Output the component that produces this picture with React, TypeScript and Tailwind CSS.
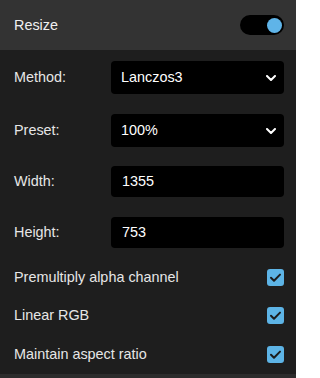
import React from "react";

function Chevron() {
  return (
    <svg width="10" height="6" viewBox="0 0 10 6" fill="none" className="shrink-0">
      <path d="M1 1L5 5L9 1" stroke="#ffffff" strokeWidth="2" strokeLinecap="round" strokeLinejoin="round" />
    </svg>
  );
}

function Check() {
  return (
    <div className="w-[17px] h-[17px] rounded-[3px] bg-[#5db4e6] flex items-center justify-center shrink-0">
      <svg width="17" height="17" viewBox="0 0 17 17" fill="none">
        <path d="M4 8.8L7 11.8L13 5.6" stroke="#1c1c1c" strokeWidth="2" strokeLinecap="round" strokeLinejoin="round" />
      </svg>
    </div>
  );
}

function FieldRow({ label, children, className }: { label: string; children: React.ReactNode; className: string }) {
  return (
    <div className={"flex items-center " + className}>
      <div className="w-[97px] shrink-0 text-[#e6e6e6]">{label}</div>
      {children}
    </div>
  );
}

function CheckRow({ label, className }: { label: string; className: string }) {
  return (
    <div className={"flex items-center justify-between h-[17px] " + className}>
      <span className="text-[#e6e6e6]">{label}</span>
      <Check />
    </div>
  );
}

export default function App() {
  return (
    <div
      className="w-[296px] h-[378px] bg-[#1e1e1e] text-[14.4px] leading-none overflow-hidden"
      style={{ fontFamily: '"Liberation Sans", Arial, sans-serif' }}
    >
      <div className="h-[50px] bg-[#333333] flex items-center justify-between pl-[14px] pr-[12px]">
        <span className="text-[#f0f0f0]">Resize</span>
        <div className="w-[44px] h-[20px] rounded-full bg-black flex items-center justify-end pr-[2.5px]">
          <div className="w-[15px] h-[15px] rounded-full bg-[#5fb4e8]" />
        </div>
      </div>
      <div className="pl-[14px] pr-[12px] pt-[11px] pb-[11px]">
        <FieldRow label="Method:" className="h-[33px]">
          <div className="flex-1 h-full bg-black rounded-[4px] flex items-center justify-between pl-[10px] pr-[8px] text-white">
            <span>Lanczos3</span>
            <Chevron />
          </div>
        </FieldRow>
        <FieldRow label="Preset:" className="h-[33px] mt-[20px]">
          <div className="flex-1 h-full bg-black rounded-[4px] flex items-center justify-between pl-[10px] pr-[8px] text-white">
            <span>100%</span>
            <Chevron />
          </div>
        </FieldRow>
        <FieldRow label="Width:" className="h-[31px] mt-[19px]">
          <div className="flex-1 h-full bg-black rounded-[4px] flex items-center pl-[11px] text-white">1355</div>
        </FieldRow>
        <FieldRow label="Height:" className="h-[31px] mt-[20px]">
          <div className="flex-1 h-full bg-black rounded-[4px] flex items-center pl-[11px] text-white">753</div>
        </FieldRow>
        <CheckRow label="Premultiply alpha channel" className="mt-[21px]" />
        <CheckRow label="Linear RGB" className="mt-[21px]" />
        <CheckRow label="Maintain aspect ratio" className="mt-[22px]" />
      </div>
      <div className="h-[4px] bg-[#2c2c2c]" />
    </div>
  );
}
